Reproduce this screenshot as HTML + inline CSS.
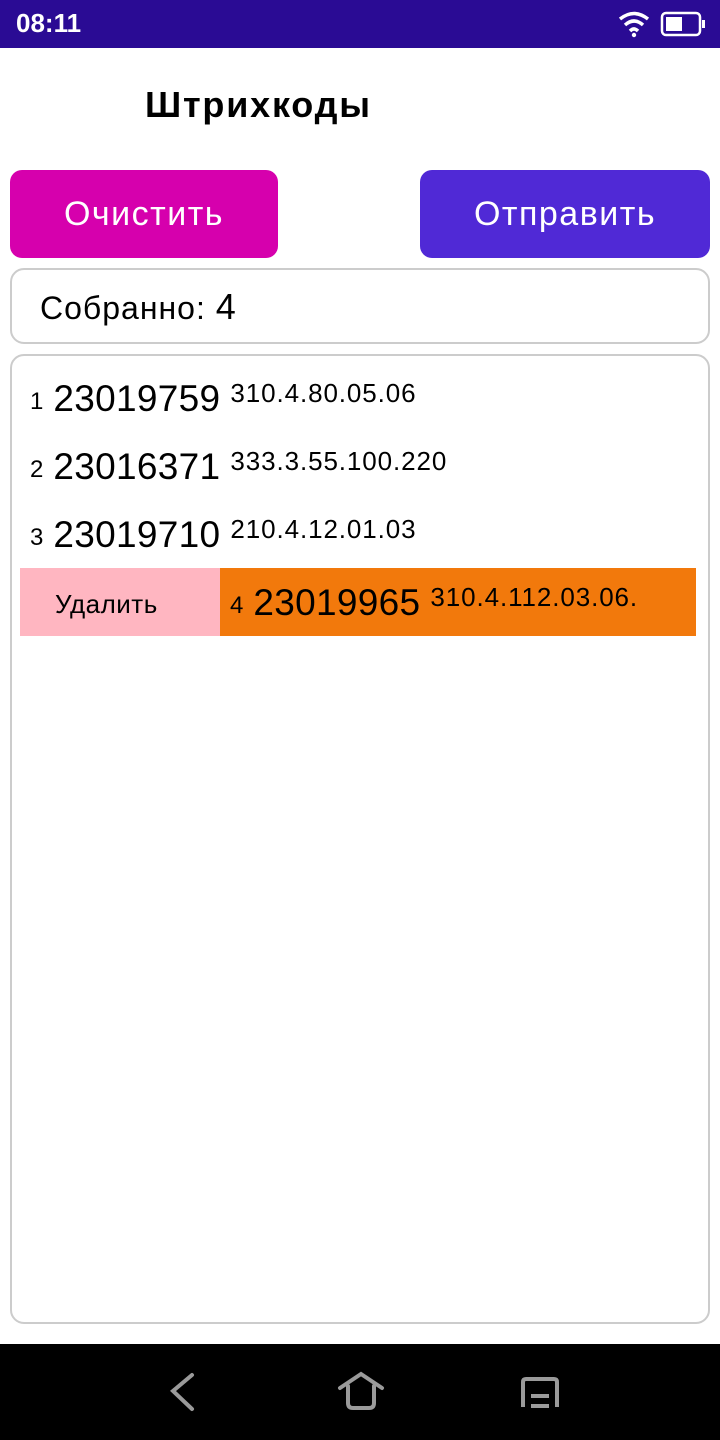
<!DOCTYPE html>
<html><head><meta charset="utf-8"><style>
*{margin:0;padding:0;box-sizing:border-box}
body{width:720px;height:1440px;background:#fff;font-family:"Liberation Sans","DejaVu Sans",sans-serif;position:relative;overflow:hidden;color:#000}
.a{position:absolute}
.sb{left:0;top:0;width:720px;height:48px;background:#2a0b94}
.btn{top:170px;height:88px;border-radius:12px;color:#fff;font-size:34px;letter-spacing:1.5px;display:flex;align-items:center;justify-content:center}
.box{border:2px solid #ccc;border-radius:14px}
.row{left:30px;height:40px;font-size:24px;display:flex;align-items:flex-start}
.n{font-size:24px;margin-top:10px;margin-right:10px}
.b{font-size:37px;margin-right:10px;letter-spacing:0.3px}
.c{font-size:26px;letter-spacing:0.9px}
</style></head><body>
<div class="a sb"></div>
<div class="a" style="left:16px;top:8px;color:#fff;font-size:26px;font-weight:bold">08:11</div>
<svg class="a" style="left:616px;top:10px" width="100" height="30">
<path d="M4 9 Q18 -2 32 9" stroke="#fff" stroke-width="3.5" fill="none"/>
<path d="M9 15 Q18 7 27 15" stroke="#fff" stroke-width="3.5" fill="none"/>
<path d="M14 21 Q18 17 22 21" stroke="#fff" stroke-width="3.5" fill="none"/>
<circle cx="18" cy="25" r="2.2" fill="#fff"/>
<rect x="46" y="3" width="38" height="22" rx="4" stroke="#fff" stroke-width="2.5" fill="none"/>
<rect x="50" y="7" width="16" height="14" fill="#fff"/>
<rect x="86" y="10" width="3" height="8" fill="#fff"/>
</svg>
<div class="a" style="left:145px;top:84px;font-size:36px;font-weight:bold;letter-spacing:1.8px">Штрихкоды</div>
<div class="a btn" style="left:10px;width:268px;background:#d600ad">Очистить</div>
<div class="a btn" style="left:420px;width:290px;background:#5029d6">Отправить</div>
<div class="a box" style="left:10px;top:268px;width:700px;height:76px"></div>
<div class="a" style="left:40px;top:286px;font-size:32px;letter-spacing:1px">Собранно: <span style="font-size:36px">4</span></div>
<div class="a box" style="left:10px;top:354px;width:700px;height:970px"></div>
<div class="a row" style="top:378px"><span class="n">1</span><span class="b">23019759</span><span class="c">310.4.80.05.06</span></div>
<div class="a row" style="top:446px"><span class="n">2</span><span class="b">23016371</span><span class="c">333.3.55.100.220</span></div>
<div class="a row" style="top:514px"><span class="n">3</span><span class="b">23019710</span><span class="c">210.4.12.01.03</span></div>
<div class="a" style="left:20px;top:568px;width:200px;height:68px;background:#ffb6c1;font-size:26px;letter-spacing:0.5px;padding:21px 0 0 35px">Удалить</div>
<div class="a" style="left:220px;top:568px;width:476px;height:68px;background:#f2790c"></div>
<div class="a row" style="left:230px;top:582px"><span class="n">4</span><span class="b">23019965</span><span class="c">310.4.112.03.06.</span></div>
<div class="a" style="left:0;top:1344px;width:720px;height:96px;background:#000"></div>
<svg class="a" style="left:140px;top:1350px" width="440" height="90" stroke="#9a9a9a" stroke-width="4" fill="none" stroke-linecap="round">
<path d="M52 25 L33 41 L52 59"/>
<path d="M200 38 L221 24 L242 38"/>
<path d="M208 36 V53 Q208 58 213 58 H229 Q234 58 234 53 V36"/>
<path d="M383 57 V32 Q383 29 386 29 H414 Q417 29 417 32 V57" stroke-linecap="butt"/>
<path d="M391 46 H409 M391 56 H409" stroke-linecap="butt"/>
</svg>
</body></html>
